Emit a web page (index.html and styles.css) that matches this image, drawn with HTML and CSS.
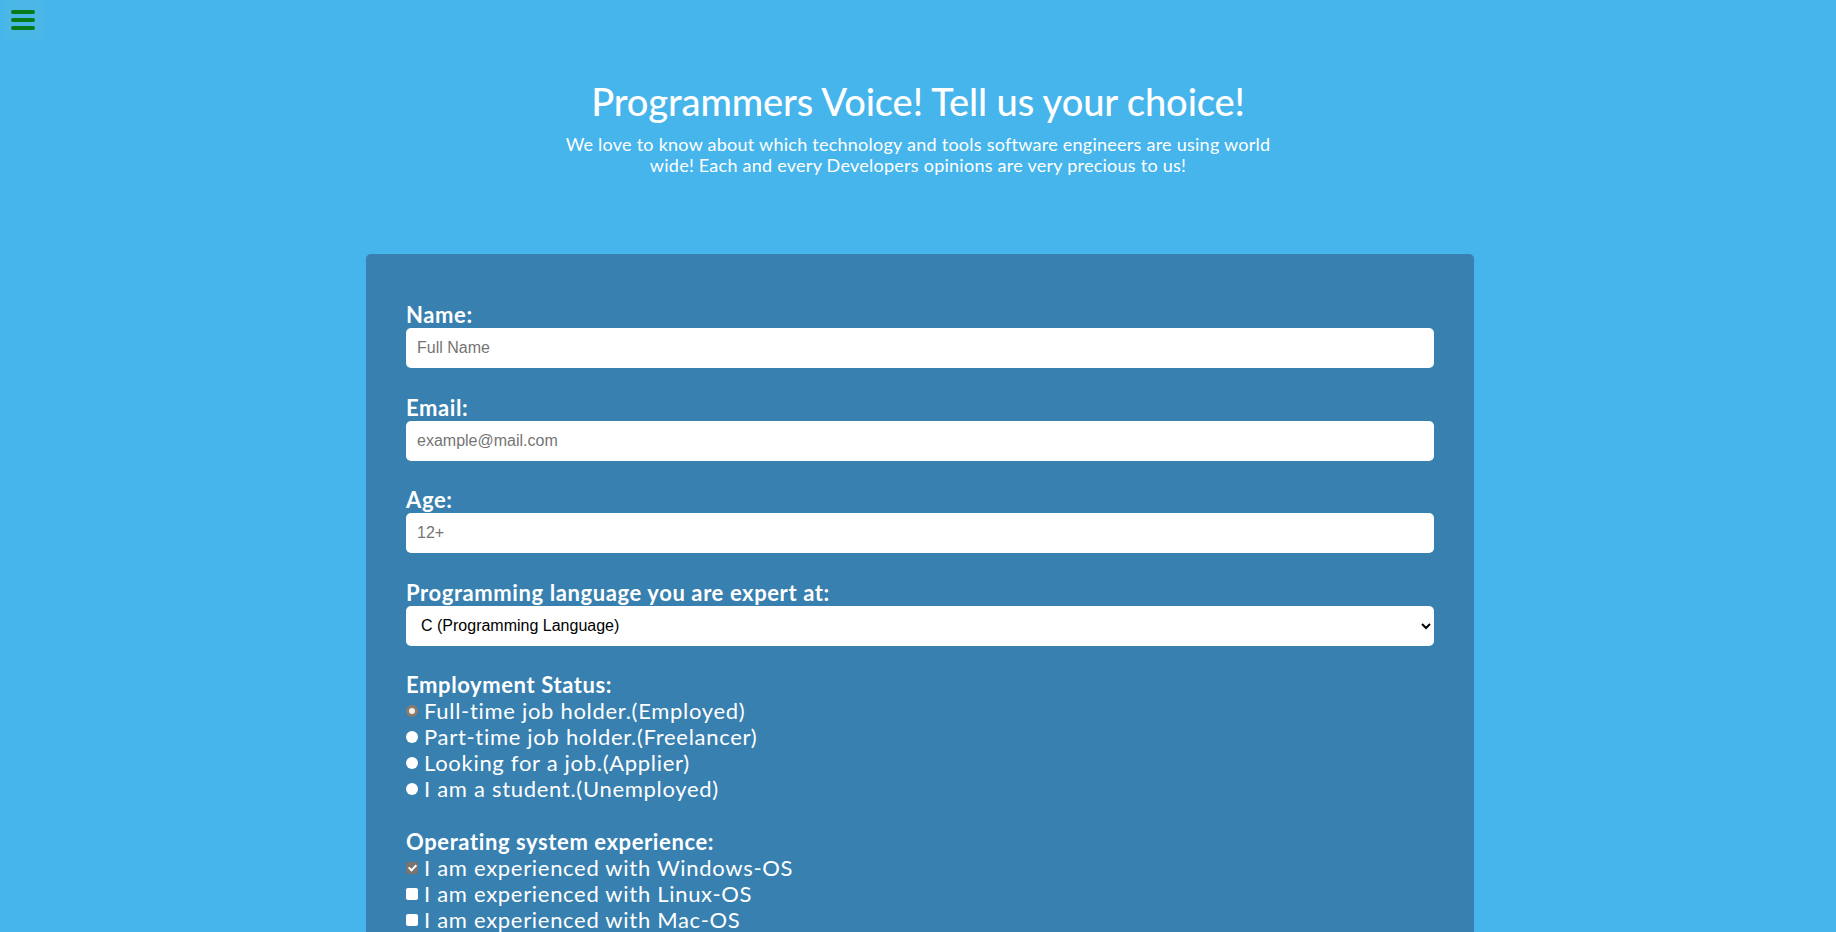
FILE: index.html
```html
<!DOCTYPE html>
<html lang="en">
<head>
<meta charset="utf-8">
<title>Programmers Voice</title>
<link rel="stylesheet" href="styles.css">
</head>
<body>
<button class="menu-btn" type="button" aria-label="Menu">
  <span class="menu-bar"></span>
  <span class="menu-bar"></span>
  <span class="menu-bar"></span>
</button>

<header class="intro">
  <h1 class="title">Programmers Voice! Tell us your choice!</h1>
  <p class="subtitle">We love to know about which technology and tools software engineers are using world wide! Each and every Developers opinions are very precious to us!</p>
</header>

<main class="survey">
  <form class="survey-form">
    <div class="field">
      <label class="field-label" for="name">Name:</label>
      <input class="text-input" id="name" type="text" placeholder="Full Name">
    </div>
    <div class="field">
      <label class="field-label" for="email">Email:</label>
      <input class="text-input" id="email" type="email" placeholder="example@mail.com">
    </div>
    <div class="field">
      <label class="field-label" for="age">Age:</label>
      <input class="text-input" id="age" type="number" placeholder="12+">
    </div>
    <div class="field">
      <label class="field-label" for="lang">Programming language you are expert at:</label>
      <select class="select-input" id="lang">
        <option>C (Programming Language)</option>
        <option>C++</option>
        <option>Java</option>
        <option>Python</option>
        <option>JavaScript</option>
      </select>
    </div>
    <div class="field">
      <span class="field-label">Employment Status:</span>
      <label class="choice"><input class="radio" type="radio" name="emp" checked> Full-time job holder.(Employed)</label>
      <label class="choice"><input class="radio" type="radio" name="emp"> Part-time job holder.(Freelancer)</label>
      <label class="choice"><input class="radio" type="radio" name="emp"> Looking for a job.(Applier)</label>
      <label class="choice"><input class="radio" type="radio" name="emp"> I am a student.(Unemployed)</label>
    </div>
    <div class="field">
      <span class="field-label">Operating system experience:</span>
      <label class="choice"><input class="check" type="checkbox" checked> I am experienced with Windows-OS</label>
      <label class="choice"><input class="check" type="checkbox"> I am experienced with Linux-OS</label>
      <label class="choice"><input class="check" type="checkbox"> I am experienced with Mac-OS</label>
    </div>
    <div class="field">
      <label class="field-label" for="comments">Any comments or suggestions?</label>
      <textarea class="text-area" id="comments" placeholder="Enter your comment here..."></textarea>
    </div>
    <button class="submit-btn" type="submit">Submit</button>
  </form>
</main>
</body>
</html>
```
FILE: styles.css
```css
html, body {
  margin: 0;
  padding: 0;
}

body {
  background: #45b5ec;
  color: #ffffff;
  font-family: "Lato", "Open Sans", sans-serif;
}

.menu-btn {
  position: fixed;
  top: 0;
  left: 3px;
  width: 40px;
  height: 39px;
  padding: 0;
  border: none;
  background: #4ab7e6;
  display: flex;
  flex-direction: column;
  align-items: center;
  justify-content: center;
  gap: 4px;
  cursor: pointer;
}

.menu-bar {
  display: block;
  width: 24px;
  height: 4px;
  border-radius: 2px;
  background: #077a1a;
}

.intro {
  padding-top: 79px;
  text-align: center;
}

.title {
  margin: 0;
  font-size: 38px;
  line-height: 44px;
  font-weight: 500;
  letter-spacing: -0.1px;
}

.subtitle {
  width: 740px;
  margin: 11px auto 0;
  font-size: 18px;
  line-height: 21px;
  letter-spacing: 0.25px;
}

.survey {
  width: 1108px;
  margin: 78px 0 0 calc(50% - 552px);
  padding: 48px 40px 60px;
  box-sizing: border-box;
  background: #3880b0;
  border-radius: 5px;
}

.survey-form {
  display: flex;
  flex-direction: column;
}

.field {
  display: flex;
  flex-direction: column;
  margin-bottom: 26.5px;
}

.field-label {
  font-size: 22px;
  line-height: 26px;
  font-weight: 700;
  letter-spacing: 0.6px;
}

.text-input,
.select-input,
.text-area {
  height: 40px;
  box-sizing: border-box;
  border: none;
  border-radius: 5px;
  background: #ffffff;
  font-family: "Liberation Sans", Arial, sans-serif;
  font-size: 16px;
  color: #000000;
  padding: 0 11px;
}

.text-input::placeholder,
.text-area::placeholder {
  color: #757575;
}

.text-area {
  height: 120px;
  padding: 10px 11px;
  resize: vertical;
}

.choice {
  display: flex;
  align-items: center;
  gap: 6px;
  font-size: 22px;
  line-height: 26px;
  letter-spacing: 0.7px;
}

.radio,
.check {
  appearance: none;
  -webkit-appearance: none;
  margin: 0;
  width: 12px;
  height: 12px;
  flex: none;
  background: #ffffff;
  box-sizing: border-box;
}

.radio {
  border-radius: 50%;
}

.radio:checked {
  border: 3px solid #8b7a6e;
  background: #f4efe9;
}

.check {
  border-radius: 2px;
  position: relative;
}

.check:checked {
  background: #7a7370;
}

.check:checked::after {
  content: "";
  position: absolute;
  left: 3.5px;
  top: 1px;
  width: 3px;
  height: 6px;
  border: solid #ffffff;
  border-width: 0 2px 2px 0;
  transform: rotate(45deg);
}

.submit-btn {
  align-self: flex-start;
  padding: 10px 30px;
  border: none;
  border-radius: 5px;
  background: #077a1a;
  color: #ffffff;
  font-family: inherit;
  font-size: 20px;
}
```
